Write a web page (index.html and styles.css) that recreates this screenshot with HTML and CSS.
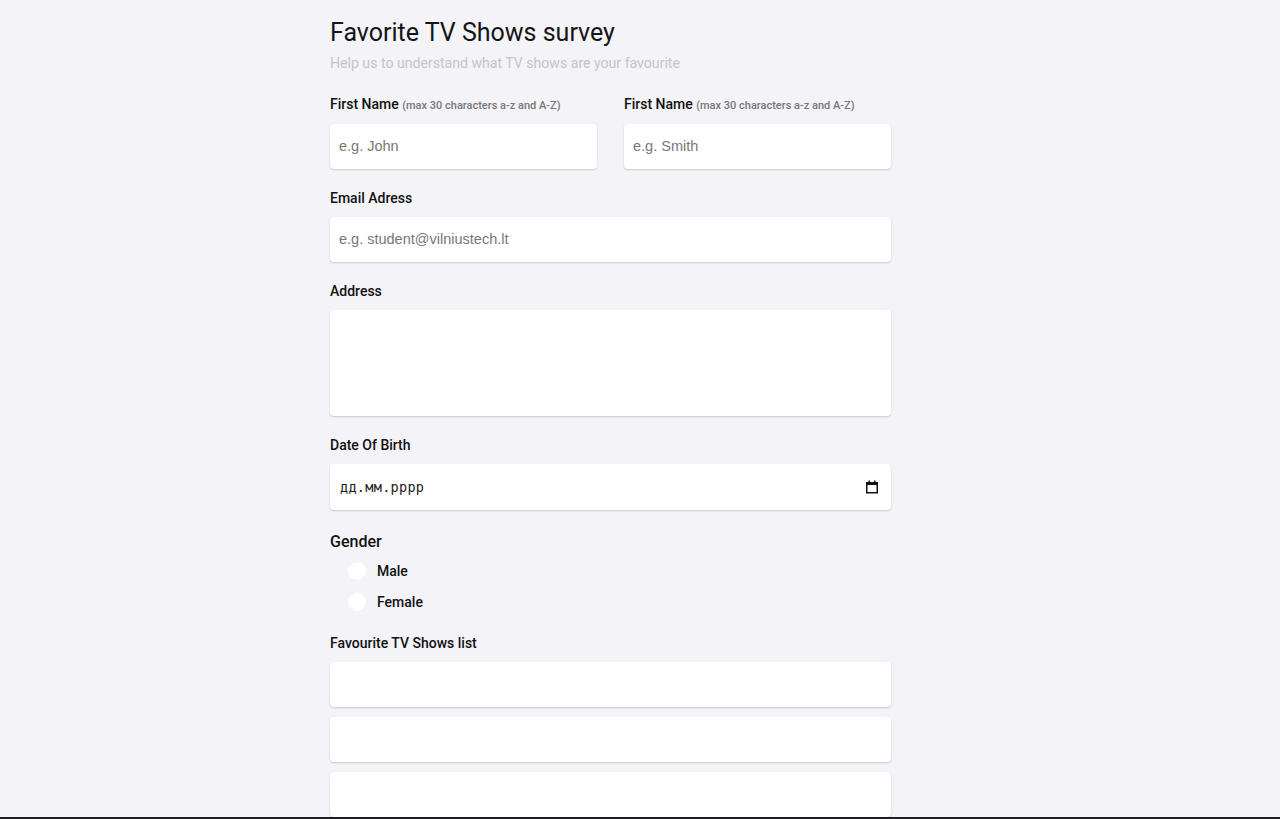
FILE: index.html
```html
<!DOCTYPE html>
<html lang="en">
<head>
<meta charset="utf-8">
<title>Favorite TV Shows survey</title>
<link rel="stylesheet" href="styles.css">
</head>
<body>
<main class="survey">
  <h1 class="title">Favorite TV Shows survey</h1>
  <p class="subtitle">Help us to understand what TV shows are your favourite</p>
  <form class="form">
    <div class="row">
      <div class="field">
        <label class="label">First Name <span class="hint">(max 30 characters a-z and A-Z)</span></label>
        <input class="input" type="text" placeholder="e.g. John">
      </div>
      <div class="field">
        <label class="label">First Name <span class="hint">(max 30 characters a-z and A-Z)</span></label>
        <input class="input" type="text" placeholder="e.g. Smith">
      </div>
    </div>
    <div class="field">
      <label class="label">Email Adress</label>
      <input class="input" type="text" placeholder="e.g. student@vilniustech.lt">
    </div>
    <div class="field">
      <label class="label">Address</label>
      <textarea class="input textarea"></textarea>
    </div>
    <div class="field">
      <label class="label">Date Of Birth</label>
      <div class="input date">
        <span class="date-text">дд.мм.рррр</span>
        <svg class="cal" width="14" height="14" viewBox="0 0 14 14" aria-hidden="true">
          <rect x="1.75" y="2.75" width="10.5" height="10" fill="none" stroke="#111" stroke-width="1.5"/>
          <rect x="1" y="2" width="12" height="3" fill="#111"/>
          <rect x="3.5" y="0.5" width="1.5" height="2" fill="#111"/>
          <rect x="9" y="0.5" width="1.5" height="2" fill="#111"/>
        </svg>
      </div>
    </div>
    <div class="field gender">
      <div class="gender-label">Gender</div>
      <label class="radio"><span class="dot"></span>Male</label>
      <label class="radio"><span class="dot"></span>Female</label>
    </div>
    <div class="field shows">
      <label class="label">Favourite TV Shows list</label>
      <div class="list">
        <input class="input" type="text">
        <input class="input" type="text">
        <input class="input" type="text">
      </div>
    </div>
  </form>
</main>
<div class="edge"></div>
</body>
</html>
```
FILE: styles.css
```css
html, body {
  margin: 0;
  padding: 0;
  background: #f3f3f8;
  font-family: Roboto, "Liberation Sans", Arial, sans-serif;
  color: #111;
}
.survey {
  width: 561px;
  margin: 0 0 0 calc(50% - 310px);
  padding: 17px 0 0;
}
.title {
  margin: 0;
  font-size: 25px;
  font-weight: 400;
  line-height: 32px;
  color: #151515;
}
.subtitle {
  margin: 5px 0 0;
  font-size: 14.1px;
  line-height: 18px;
  color: #c4c4cc;
}
.form {
  display: flex;
  flex-direction: column;
  gap: 20px;
  margin-top: 23px;
}
.row {
  display: grid;
  grid-template-columns: 1fr 1fr;
  gap: 27px;
}
.field {
  display: flex;
  flex-direction: column;
}
.label {
  font-size: 14px;
  font-weight: 500;
  line-height: 18px;
  margin-bottom: 10px;
  color: #111;
}
.row .label {
  margin-bottom: 11px;
}
.hint {
  font-size: 11px;
  line-height: 1;
  color: #777;
  font-weight: 500;
}
.input {
  box-sizing: border-box;
  height: 45px;
  border: none;
  border-radius: 4px;
  background: #fff;
  box-shadow: 0 1px 2px rgba(0, 0, 0, 0.18);
  padding: 0 9px 1px;
  font-family: "Liberation Sans", Arial, sans-serif;
  font-size: 14.5px;
  color: #111;
  outline: none;
  width: 100%;
  margin: 0;
}
.input::placeholder {
  color: #777;
}
.textarea {
  height: 106px;
  resize: none;
  display: block;
}
.date {
  height: 46px;
  display: flex;
  align-items: center;
  justify-content: space-between;
  padding: 0 12px 0 10px;
}
.date-text {
  font-family: "DejaVu Sans Mono", "Liberation Mono", monospace;
  font-size: 13.5px;
  letter-spacing: 0.3px;
  color: #222;
}
.cal {
  display: block;
}
.gender {
  margin-top: 2px;
}
.gender-label {
  font-size: 16px;
  font-weight: 500;
  line-height: 19px;
  margin-bottom: 4px;
}
.radio {
  display: flex;
  align-items: center;
  gap: 11px;
  height: 31px;
  padding-left: 18px;
  font-size: 14px;
  font-weight: 500;
}
.dot {
  width: 18px;
  height: 18px;
  border-radius: 50%;
  background: #fff;
}
.shows {
  margin-top: -3px;
}
.list {
  display: flex;
  flex-direction: column;
  gap: 10px;
}
.edge {
  position: fixed;
  left: 0;
  right: 0;
  bottom: 0;
  height: 2px;
  background: #1e1e22;
}
```
